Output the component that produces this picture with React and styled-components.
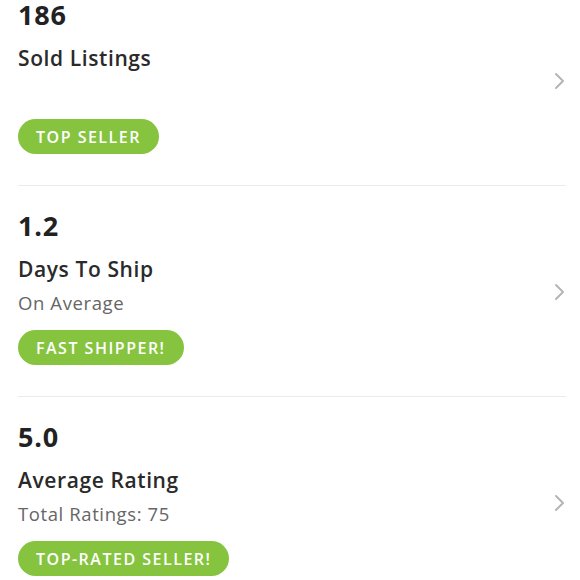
import React from "react";
import styled, { createGlobalStyle } from "styled-components";

const GlobalStyle = createGlobalStyle`
  html, body {
    margin: 0;
    padding: 0;
    background: #ffffff;
    font-family: "Open Sans", Lato, sans-serif;
    overflow: hidden;
  }
`;

const stats = [
  { value: "186", title: "Sold Listings", sub: "", badge: "TOP SELLER" },
  { value: "1.2", title: "Days To Ship", sub: "On Average", badge: "FAST SHIPPER!" },
  { value: "5.0", title: "Average Rating", sub: "Total Ratings: 75", badge: "TOP-RATED SELLER!" },
];

function Stats() {
  return (
    <List>
      {stats.map((s) => (
        <Row key={s.value}>
          <Info>
            <Value>{s.value}</Value>
            <Title>{s.title}</Title>
            <Sub>{s.sub}</Sub>
            <Badge>{s.badge}</Badge>
          </Info>
          <Chevron viewBox="0 0 12 18">
            <path d="M2 2l7 7-7 7" fill="none" stroke="#b5b5b5" strokeWidth="2" strokeLinecap="round" strokeLinejoin="round" />
          </Chevron>
        </Row>
      ))}
    </List>
  );
}

export default function App() {
  return (
    <>
      <GlobalStyle />
      <Stats />
    </>
  );
}

const List = styled.div`
  margin-top: -25px;
  padding: 0 14px 0 18px;
`;

const Row = styled.div`
  display: flex;
  align-items: center;
  padding: 26px 0 31px;
  border-bottom: 1px solid #ebebeb;
`;

const Info = styled.div`
  flex: 1;
  display: flex;
  flex-direction: column;
  align-items: flex-start;
`;

const Value = styled.div`
  font-size: 27px;
  font-weight: 700;
  color: #222;
  line-height: 28px;
  letter-spacing: 0.8px;
`;

const Title = styled.div`
  margin-top: 14px;
  font-size: 21px;
  font-weight: 600;
  color: #2a2a2a;
  line-height: 30px;
  letter-spacing: 0.6px;
`;

const Sub = styled.div`
  margin-top: 5px;
  font-size: 18.5px;
  color: #666;
  line-height: 28px;
  min-height: 28px;
  letter-spacing: 0.6px;
`;

const Badge = styled.span`
  margin-top: 13px;
  display: inline-flex;
  align-items: center;
  height: 35px;
  padding: 0 18px;
  border-radius: 18px;
  background: #86c440;
  color: #fff;
  font-size: 16px;
  font-weight: 600;
  letter-spacing: 1.5px;
`;

const Chevron = styled.svg`
  width: 12px;
  height: 18px;
  margin-top: 6px;
  flex-shrink: 0;
`;
